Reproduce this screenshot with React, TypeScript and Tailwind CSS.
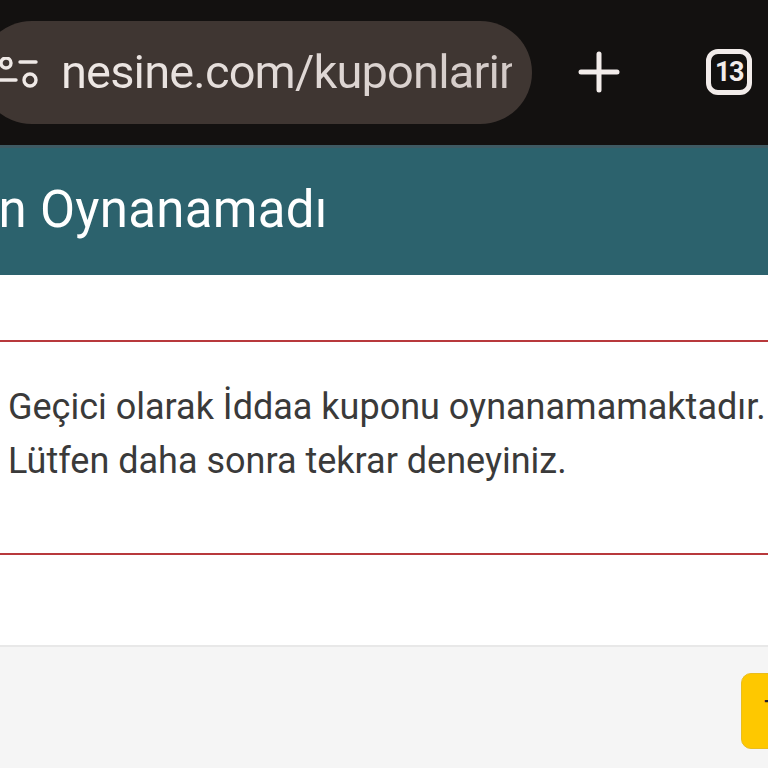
import React from "react";

export default function App() {
  return (
    <div className="w-[768px] h-[768px] overflow-hidden flex flex-col bg-white font-['Roboto',sans-serif]">
      <div className="h-[145px] shrink-0 bg-[#131110] flex items-center pb-[1px]">
        <div className="-ml-[20px] w-[552px] h-[103px] rounded-[52px] bg-[#3f3632] flex items-center pl-[20px] shrink-0">
          <svg width="38" height="32" viewBox="0 0 38 32" fill="none" stroke="#efe9e6" strokeWidth="3.4" strokeLinecap="round" className="shrink-0 mt-[1px]">
            <circle cx="6" cy="6" r="5" />
            <line x1="20" y1="5" x2="36" y2="5" />
            <line x1="0" y1="23" x2="16" y2="23" />
            <circle cx="30" cy="23" r="6" />
          </svg>
          <span className="ml-[23px] pb-[1px] text-[47px] leading-none whitespace-nowrap overflow-hidden w-[451px] tracking-[-0.85px] text-transparent bg-clip-text bg-gradient-to-r from-[#efe9e6] to-[#d3cac7]">nesine.com/kuponlarim</span>
        </div>
        <svg width="42" height="42" viewBox="0 0 42 42" fill="none" stroke="#f2ecea" strokeWidth="5" strokeLinecap="round" className="ml-[46px] shrink-0">
          <line x1="21" y1="3" x2="21" y2="39" />
          <line x1="3" y1="21" x2="39" y2="21" />
        </svg>
        <div className="ml-[86px] w-[46px] h-[46px] rounded-[12px] border-[5px] border-[#f2ecea] flex items-center justify-center text-[#f2ecea] text-[27px] font-bold tracking-[-1.5px] shrink-0">13</div>
      </div>
      <div className="h-[3px] shrink-0 bg-[#3e5a63]" />
      <div className="h-[127px] shrink-0 bg-[#2c626d] flex items-center overflow-hidden">
        <span className="-ml-[120px] -mt-[4px] text-[51px] tracking-[0.3px] text-white whitespace-nowrap leading-none">Kupon Oynanamadı</span>
      </div>
      <div className="mt-[65px] h-[215px] shrink-0 border-y-2 border-[#b8393c] pl-[8px] pt-[38px] text-[36px] leading-[54px] text-[#3a3a3a] whitespace-nowrap overflow-hidden">
        <p>Geçici olarak İddaa kuponu oynanamamaktadır.</p>
        <p>Lütfen daha sonra tekrar deneyiniz.</p>
      </div>
      <div className="h-[90px] shrink-0" />
      <div className="flex-1 bg-[#f5f5f5] border-t-2 border-[#e8e8e8] flex justify-start pl-[741px] pt-[26px]">
        <div className="w-[60px] h-[76px] shrink-0 rounded-[10px] bg-[#fec800] border border-[#e9bd20] flex items-center pl-[22px] overflow-hidden text-[#222] text-[28px]">
          T
        </div>
      </div>
    </div>
  );
}
